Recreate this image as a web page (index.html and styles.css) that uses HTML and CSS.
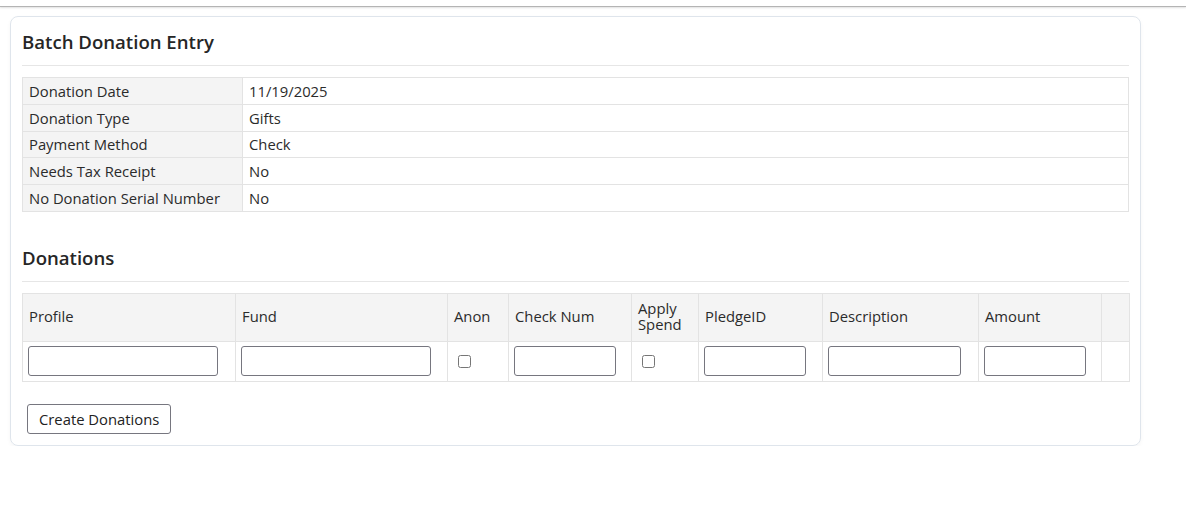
FILE: index.html
```html
<!DOCTYPE html>
<html>
<head>
<meta charset="utf-8">
<link rel="stylesheet" href="styles.css">
</head>
<body>
<div class="topbar"></div>
<div class="card">
  <div class="section-head"><h2>Batch Donation Entry</h2></div>
  <table class="info">
    <colgroup><col class="c-lbl"><col></colgroup>
    <tr><td class="lbl">Donation Date</td><td>11/19/2025</td></tr>
    <tr><td class="lbl">Donation Type</td><td>Gifts</td></tr>
    <tr><td class="lbl">Payment Method</td><td>Check</td></tr>
    <tr><td class="lbl">Needs Tax Receipt</td><td>No</td></tr>
    <tr><td class="lbl">No Donation Serial Number</td><td>No</td></tr>
  </table>
  <div class="section-head second"><h2>Donations</h2></div>
  <table class="grid">
    <colgroup>
      <col class="c-profile"><col class="c-fund"><col class="c-anon"><col class="c-check"><col class="c-apply"><col class="c-pledge"><col class="c-desc"><col class="c-amount"><col class="c-end">
    </colgroup>
    <thead>
      <tr><th>Profile</th><th>Fund</th><th>Anon</th><th>Check Num</th><th>Apply Spend</th><th>PledgeID</th><th>Description</th><th>Amount</th><th></th></tr>
    </thead>
    <tbody>
      <tr>
        <td><input type="text" class="in-wide"></td>
        <td><input type="text" class="in-wide"></td>
        <td><input type="checkbox"></td>
        <td><input type="text" class="in-short"></td>
        <td><input type="checkbox"></td>
        <td><input type="text" class="in-short"></td>
        <td><input type="text" class="in-desc"></td>
        <td><input type="text" class="in-short"></td>
        <td></td>
      </tr>
    </tbody>
  </table>
  <div class="actions"><button type="button" class="btn">Create Donations</button></div>
</div>
</body>
</html>
```
FILE: styles.css
```css
html, body { margin: 0; padding: 0; background: #fff; }
body { font-family: "Open Sans", "Noto Sans", sans-serif; font-size: 14.8px; color: #2b2b2b; }
.topbar { height: 6px; border-bottom: 1px solid #b4b4b4; box-shadow: 0 1px 2px rgba(0,0,0,0.12); }
.card {
  width: 1107px;
  margin: 9px 0 0 10px;
  border: 1px solid #dfe5ec;
  border-radius: 8px;
  padding: 0 11px 11px;
  box-shadow: 0 2px 4px rgba(0,0,0,0.04);
}
.section-head { padding: 12px 0 10px; border-bottom: 1px solid #e6e6e6; margin-bottom: 11px; }
.section-head.second { margin-top: 21px; }
h2 { margin: 0; font-size: 18.6px; line-height: 26px; font-weight: 600; color: #262626; }
table { border-collapse: collapse; width: 1107px; table-layout: fixed; }
td, th { border: 1px solid #e3e3e3; }
.c-lbl { width: 220px; }
.info td { height: 25.8px; padding: 0 6px; line-height: 18px; box-sizing: border-box; }
.info tr { height: 26.8px; }
.info td.lbl { background: #f4f4f4; }
.grid th { background: #f4f4f4; font-weight: 400; text-align: left; padding: 6px 6px 8px; line-height: 16px; height: 33px; }
.grid td { padding: 4px 5px 5px; height: 30px; vertical-align: top; }
.c-profile { width: 213px; } .c-fund { width: 212px; } .c-anon { width: 61px; } .c-check { width: 123px; }
.c-apply { width: 67px; } .c-pledge { width: 124px; } .c-desc { width: 156px; } .c-amount { width: 123px; } .c-end { width: 28px; }
input[type=text] { box-sizing: border-box; height: 30px; border: 1px solid #76767f; border-radius: 3px; margin: 0; padding: 2px 4px; display: block; font: inherit; }
.in-wide { width: 190px; } .in-short { width: 102px; } .in-desc { width: 133px; }
input[type=checkbox] { width: 13px; height: 13px; margin: 9px 3px 3px 5px; }
.actions { padding-top: 22px; }
.btn { font: inherit; color: #222; background: #fff; border: 1px solid #76767f; border-radius: 3px; height: 30px; padding: 0 11px; margin-left: 5px; }
```
